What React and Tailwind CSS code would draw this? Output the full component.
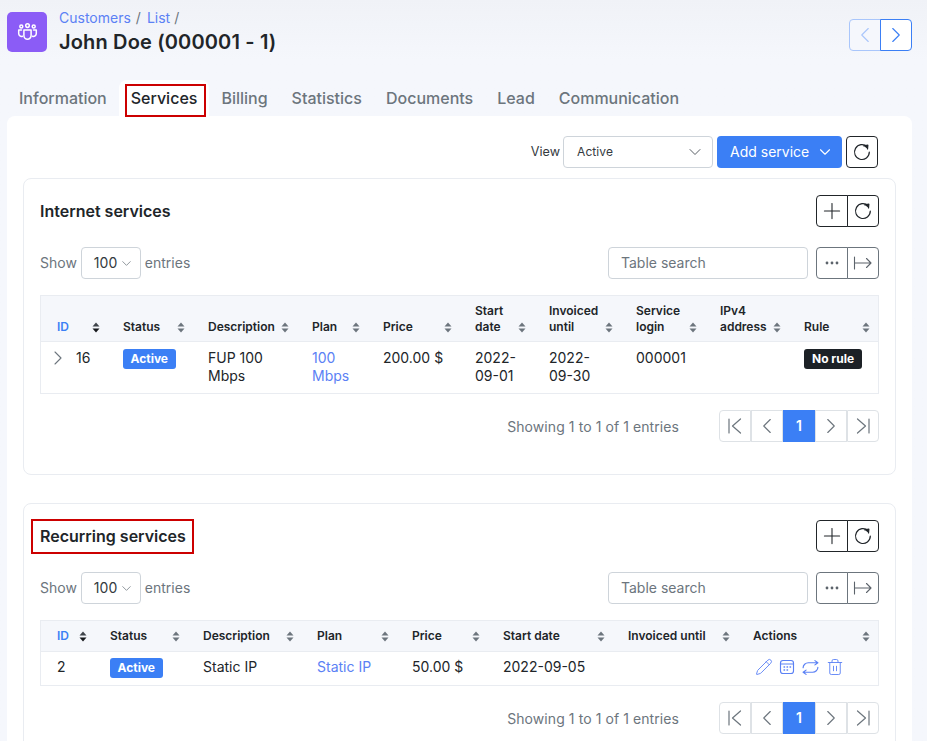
import React from "react";
import { ChevronLeft, ChevronRight, ChevronDown, Plus, Pencil, Trash2 } from "lucide-react";

const Refresh = () => (
  <svg width="20" height="20" viewBox="0 0 20 20" fill="none" stroke="#1f2429" strokeWidth="1.2" strokeLinecap="round" strokeLinejoin="round">
    <path d="M15.2 4.9A7.4 7.4 0 1 0 17.3 10" />
    <path d="M11.6 4.3 15.6 2.9 15.8 6.9" transform="rotate(8 15 5)" fill="#1f2429" />
  </svg>
);

const People = () => (
  <svg width="21" height="20" viewBox="0 0 20 20" fill="none" stroke="#fff" strokeWidth="1.5" strokeLinecap="round" strokeLinejoin="round">
    <circle cx="10" cy="3.6" r="1.8" />
    <circle cx="3.8" cy="4.6" r="1.5" />
    <circle cx="16.2" cy="4.6" r="1.5" />
    <path d="M6.4 8h7.2v5.6a3.6 3.6 0 0 1-7.2 0z" />
    <path d="M4 8H1.2v3.6a2.8 2.8 0 0 0 3.8 2.6" />
    <path d="M16 8h2.8v3.6a2.8 2.8 0 0 1-3.8 2.6" />
  </svg>
);

const Sort = ({ dark }) => (
  <svg width="8" height="11" viewBox="0 0 8 11" className="shrink-0">
    <path d="M4 0.5 7.5 4.5H0.5z" fill={dark ? "#3f444a" : "#6c757d"} />
    <path d="M4 10.5 7.5 6.5H0.5z" fill={dark ? "#16191c" : "#6c757d"} />
  </svg>
);

const Dots = () => (
  <svg width="14" height="4" viewBox="0 0 14 4" fill="#5c636b">
    <circle cx="2" cy="2" r="1.4" />
    <circle cx="7" cy="2" r="1.4" />
    <circle cx="12" cy="2" r="1.4" />
  </svg>
);

const ExportIcon = () => (
  <svg width="20" height="16" viewBox="0 0 20 16" fill="none" stroke="#5c636b" strokeWidth="1.1" strokeLinecap="round" strokeLinejoin="round">
    <path d="M1.5 2v12M2 8h16M13.5 3.5 18 8l-4.5 4.5" />
  </svg>
);

const First = () => (
  <svg width="16" height="18" viewBox="0 0 16 18" fill="none" stroke="#6c757d" strokeWidth="1.2" strokeLinecap="round" strokeLinejoin="round">
    <path d="M2 2v14M13.5 2 5.5 9l8 7" />
  </svg>
);
const Last = () => (
  <svg width="16" height="18" viewBox="0 0 16 18" fill="none" stroke="#6c757d" strokeWidth="1.2" strokeLinecap="round" strokeLinejoin="round">
    <path d="M14 2v14M2.5 2l8 7-8 7" />
  </svg>
);

const Calendar = () => (
  <svg width="16" height="16" viewBox="0 0 16 16" fill="none" stroke="#5b81f5" strokeWidth="1.15" strokeLinecap="round" strokeLinejoin="round">
    <rect x="1.5" y="1.5" width="13" height="13" rx="2.5" />
    <path d="M1.5 5h13" />
    <path d="M5 8h.6M8 8h.6M11 8h.6M5 11h.6M8 11h.6" strokeWidth="1.3" />
  </svg>
);

const Loop = () => (
  <svg width="19" height="19" viewBox="0 0 18 18" fill="none" stroke="#5b81f5" strokeWidth="1.1" strokeLinecap="round" strokeLinejoin="round">
    <path d="M2 9.2a5 4.7 0 0 1 5-4.7h9M13.2 2.5l2.8 2-2.8 2" />
    <path d="M16 8.8a5 4.7 0 0 1-5 4.7H2M4.8 11.5l-2.8 2 2.8 2" />
  </svg>
);

const Th = ({ children, last }) => (
  <th className={`h-full p-0 pl-2 align-bottom font-semibold ${last ? "pr-2" : "pr-[15px]"}`}>
    <div className="flex items-end justify-between leading-4">
      <span className="text-left text-[#212529]">{children}</span>
      <span className="mb-[2px]"><Sort /></span>
    </div>
  </th>
);

const Badge = ({ children, dark }) => (
  <span className={`inline-flex h-5 items-center rounded-[3px] text-xs font-bold text-white ${dark ? "bg-[#1c2126] px-2" : "bg-[#3b7ff5] px-[7.5px]"}`}>
    {children}
  </span>
);

const GroupBtn = ({ children, left, muted }) => (
  <button className={`flex h-8 w-8 items-center justify-center border bg-white ${muted ? "border-[#6c757d]" : "border-[#212529]"} ${left ? "rounded-l-[4px]" : "-ml-px rounded-r-[4px]"}`}>
    {children}
  </button>
);

const Controls = () => (
  <div className="flex items-center justify-between">
    <div className="flex items-center text-sm text-[#6c757d]">
      <span>Show</span>
      <div className="mx-1 flex h-8 w-[60px] items-center rounded-[4px] border border-[#ced4da] pl-3 text-[#343a40]">
        <span>100</span>
        <ChevronDown size={15} strokeWidth={1.2} className="ml-[2px] text-[#6c757d]" />
      </div>
      <span>entries</span>
    </div>
    <div className="flex items-center">
      <div className="flex h-8 w-[200px] items-center rounded-[4px] border border-[#ced4da] pl-3 text-sm text-[#6c757d]">Table search</div>
      <div className="ml-2 flex">
        <GroupBtn left muted><Dots /></GroupBtn>
        <GroupBtn muted><ExportIcon /></GroupBtn>
      </div>
    </div>
  </div>
);

const Footer = () => (
  <div className="mt-4 flex items-center justify-end">
    <span className="mr-10 pt-[2px] text-sm tracking-[0.08px] text-[#6c757d]">Showing 1 to 1 of 1 entries</span>
    <div className="flex">
      <div className="flex h-8 w-8 items-center justify-center rounded-l-[4px] border border-[#dee2e6]"><First /></div>
      <div className="flex h-8 w-8 items-center justify-center border border-[#dee2e6]"><ChevronLeft size={26} strokeWidth={1.05} className="text-[#6c757d]" /></div>
      <div className="flex h-8 w-8 items-center justify-center bg-[#3b7ff5] text-sm font-semibold text-white">1</div>
      <div className="flex h-8 w-8 items-center justify-center border border-[#dee2e6]"><ChevronRight size={26} strokeWidth={1.05} className="text-[#6c757d]" /></div>
      <div className="flex h-8 w-8 items-center justify-center rounded-r-[4px] border border-[#dee2e6]"><Last /></div>
    </div>
  </div>
);

const CardHeader = ({ title, marked }) => (
  <div className="flex h-8 items-center justify-between">
    <div className="relative text-base font-semibold text-[#212529]">
      {title}
      {marked && <span className="absolute -bottom-[6px] -left-[9px] -right-[8px] -top-[5px] border-2 border-[#cc0000]" />}
    </div>
    <div className="flex">
      <GroupBtn left><Plus size={26} strokeWidth={1} className="text-[#212529]" /></GroupBtn>
      <GroupBtn><Refresh /></GroupBtn>
    </div>
  </div>
);

const tabs = ["Information", "Services", "Billing", "Statistics", "Documents", "Lead", "Communication"];

export default function App() {
  return (
    <div className="h-[741px] overflow-hidden bg-gradient-to-b from-[#f0f2f7] to-[#f5f7fc] to-[60px] [font-family:Inter,sans-serif]">
      <div className="flex justify-between pl-[7px] pr-[15px] pt-3">
        <div className="flex">
          <div className="flex h-10 w-10 items-center justify-center rounded-[5px] bg-[#8b5cf6]"><People /></div>
          <div className="ml-3">
            <div className="-mt-[3px] text-sm leading-[18px] text-[#5b81f5]">
              Customers<span className="ml-[5px] mr-[6px] text-[#6c757d]">/</span>List<span className="ml-[4px] text-[#6c757d]">/</span>
            </div>
            <div className="mt-[3px] text-xl font-semibold leading-6 tracking-[0.15px] text-[#212529]">John Doe (000001 - 1)</div>
          </div>
        </div>
        <div className="mt-[7px] flex">
          <button className="flex h-8 w-8 items-center justify-center rounded-l-[4px] border border-[#a9c6fb] bg-[#f5f7fc]"><ChevronLeft size={26} strokeWidth={1.05} className="text-[#a9c6fb]" /></button>
          <button className="-ml-px flex h-8 w-8 items-center justify-center rounded-r-[4px] border border-[#3b7ff5] bg-white"><ChevronRight size={26} strokeWidth={1.05} className="text-[#3b7ff5]" /></button>
        </div>
      </div>

      <div className="mt-[26px] flex pl-[7px]">
        {tabs.map((t) => (
          <div key={t} className={`relative flex h-9 items-center rounded-t-lg px-3 text-base font-medium ${t === "Services" ? "bg-white text-[#212529]" : "text-[#6c757d]"}`}>
            {t}
            {t === "Services" && <span className="absolute bottom-[-1px] left-[6px] right-[3px] top-[4px] border-2 border-[#cc0000]" />}
          </div>
        ))}
      </div>

      <div className="mx-[7px] w-[905px] rounded-lg bg-white px-4 pt-5">
        <div className="flex items-center justify-end pr-[18px] text-sm">
          <span className="mr-[3px] text-[12.6px] text-[#343a40]">View</span>
          <div className="flex h-8 w-[150px] items-center justify-between rounded-[4px] border border-[#ced4da] pl-[13px] pr-[7px] text-xs tracking-[0.1px] text-[#343a40]">
            <span>Active</span>
            <ChevronDown size={20} strokeWidth={1.1} className="text-[#495057]" />
          </div>
          <button className="ml-1 flex h-8 w-[125px] items-center rounded-[4px] bg-[#3b7ff5] pl-[13px] text-white">
            Add service
            <ChevronDown size={18} strokeWidth={1.5} className="ml-[7px]" />
          </button>
          <button className="ml-1 flex h-8 w-8 items-center justify-center rounded-[4px] border border-[#212529]"><Refresh /></button>
        </div>

        <div className="mt-[10px] h-[297px] rounded-lg border border-[#e9ecf1] px-4 pt-4">
          <CardHeader title="Internet services" />
          <div className="mt-5"><Controls /></div>
          <div className="mt-4 border border-[#e9ecf1]">
            <table className="w-full table-fixed border-collapse text-sm text-[#212529]">
              <colgroup>
                <col className="w-[74px]" /><col className="w-[85px]" /><col className="w-[104px]" /><col className="w-[71px]" /><col className="w-[92px]" /><col className="w-[74px]" /><col className="w-[87px]" /><col className="w-[84px]" /><col className="w-[84px]" /><col />
              </colgroup>
              <thead className="bg-[#f5f7fb] text-xs">
                <tr className="h-[45px] border-b border-[#e9ecf1] [&>th]:pb-[6px]">
                  <th className="p-0 pl-4 pr-[15px] align-bottom font-semibold">
                    <div className="flex items-end justify-between leading-4"><span className="text-[#3b7ff5]">ID</span><span className="mb-[2px]"><Sort dark /></span></div>
                  </th>
                  <Th>Status</Th><Th>Description</Th><Th>Plan</Th><Th>Price</Th><Th>Start date</Th><Th>Invoiced until</Th><Th>Service login</Th><Th>IPv4 address</Th><Th last>Rule</Th>
                </tr>
              </thead>
              <tbody className="leading-[18px]">
                <tr className="h-[52px] [&>td]:px-2 [&>td]:pb-[8px] [&>td]:pt-[7px] [&>td]:align-top">
                  <td><div className="flex items-center pl-[1px]"><ChevronRight size={24} strokeWidth={1.1} className="-my-[3px] -ml-[4px] text-[#6c757d]" /><span className="ml-[6px]">16</span></div></td>
                  <td><Badge>Active</Badge></td>
                  <td>FUP 100 Mbps</td>
                  <td className="text-[#5b81f5]">100 Mbps</td>
                  <td>200.00 $</td>
                  <td>2022-<br />09-01</td>
                  <td>2022-<br />09-30</td>
                  <td>000001</td>
                  <td></td>
                  <td><Badge dark>No rule</Badge></td>
                </tr>
              </tbody>
            </table>
          </div>
          <Footer />
        </div>

        <div className="mt-7 h-[300px] rounded-lg border border-[#e9ecf1] px-4 pt-4">
          <CardHeader title="Recurring services" marked />
          <div className="mt-5"><Controls /></div>
          <div className="mt-4 border border-[#e9ecf1]">
            <table className="w-full table-fixed border-collapse text-sm text-[#212529]">
              <colgroup>
                <col className="w-[61px]" /><col className="w-[93px]" /><col className="w-[114px]" /><col className="w-[95px]" /><col className="w-[91px]" /><col className="w-[125px]" /><col className="w-[125px]" /><col />
              </colgroup>
              <thead className="bg-[#f5f7fb] text-xs">
                <tr className="h-[30px] border-b border-[#e9ecf1] [&>th]:pb-[7px]">
                  <th className="p-0 pl-4 pr-[15px] align-bottom font-semibold">
                    <div className="flex items-end justify-between leading-4"><span className="text-[#3b7ff5]">ID</span><span className="mb-[2px]"><Sort dark /></span></div>
                  </th>
                  <Th>Status</Th><Th>Description</Th><Th>Plan</Th><Th>Price</Th><Th>Start date</Th><Th>Invoiced until</Th><Th last>Actions</Th>
                </tr>
              </thead>
              <tbody>
                <tr className="h-[34px] [&>td]:px-2 [&>td]:pb-[2px] [&>td]:align-middle">
                  <td className="!pl-4">2</td>
                  <td><Badge>Active</Badge></td>
                  <td>Static IP</td>
                  <td className="text-[#5b81f5]">Static IP</td>
                  <td>50.00 $</td>
                  <td>2022-09-05</td>
                  <td></td>
                  <td>
                    <div className="flex items-center gap-[6px] pl-[1.5px] text-[#5b81f5]">
                      <Pencil size={18} strokeWidth={1.2} />
                      <Calendar />
                      <Loop />
                      <Trash2 size={18} strokeWidth={1.2} />
                    </div>
                  </td>
                </tr>
              </tbody>
            </table>
          </div>
          <Footer />
        </div>
      </div>
    </div>
  );
}
